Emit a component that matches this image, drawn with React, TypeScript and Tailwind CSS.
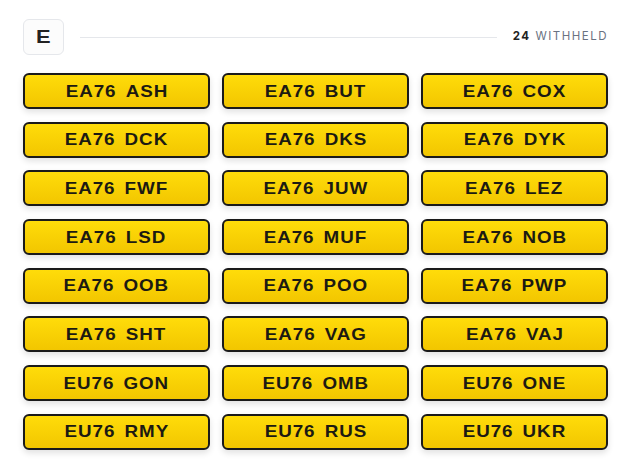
const plates = [
  'EA76 ASH', 'EA76 BUT', 'EA76 COX',
  'EA76 DCK', 'EA76 DKS', 'EA76 DYK',
  'EA76 FWF', 'EA76 JUW', 'EA76 LEZ',
  'EA76 LSD', 'EA76 MUF', 'EA76 NOB',
  'EA76 OOB', 'EA76 POO', 'EA76 PWP',
  'EA76 SHT', 'EA76 VAG', 'EA76 VAJ',
  'EU76 GON', 'EU76 OMB', 'EU76 ONE',
  'EU76 RMY', 'EU76 RUS', 'EU76 UKR',
];

const Plate = ({ reg }: { reg: string }) => {
  const [a, b] = reg.split(' ');
  return (
    <div className="h-[36px] rounded-[6px] border-2 border-[#1a1a1a] bg-gradient-to-b from-[#ffdc0a] to-[#f2c600] shadow-[0_3px_6px_rgba(0,0,0,0.12)] flex items-center justify-center">
      <div className="flex gap-[8px] scale-x-[1.14] font-['Liberation_Sans',Arial,sans-serif] font-bold text-[16.5px] tracking-[0.05em] text-[#1c1a12]">
        <span>{a}</span>
        <span>{b}</span>
      </div>
    </div>
  );
};

export default function App() {
  return (
    <div className="min-h-screen bg-white pl-[23px] pr-[21px] pt-[19px] font-['Inter',sans-serif]">
      <div className="flex items-center h-[36px]">
        <div className="w-[41px] h-[36px] rounded-md border border-gray-200 bg-[#fcfcfc] flex items-center justify-center">
          <span className="scale-x-[1.15] font-['Liberation_Sans',Arial,sans-serif] font-bold text-[19px] text-[#222]">E</span>
        </div>
        <div className="flex-1 h-px bg-gray-200 ml-[16px] mr-[16px]" />
        <div className="text-[11.5px] tracking-[0.13em] text-gray-500">
          <span className="font-bold text-[#222]">24</span> WITHHELD
        </div>
      </div>
      <div className="grid grid-cols-3 gap-x-[12px] gap-y-[12.7px] mt-[18px]">
        {plates.map((p) => (
          <Plate key={p} reg={p} />
        ))}
      </div>
    </div>
  );
}
